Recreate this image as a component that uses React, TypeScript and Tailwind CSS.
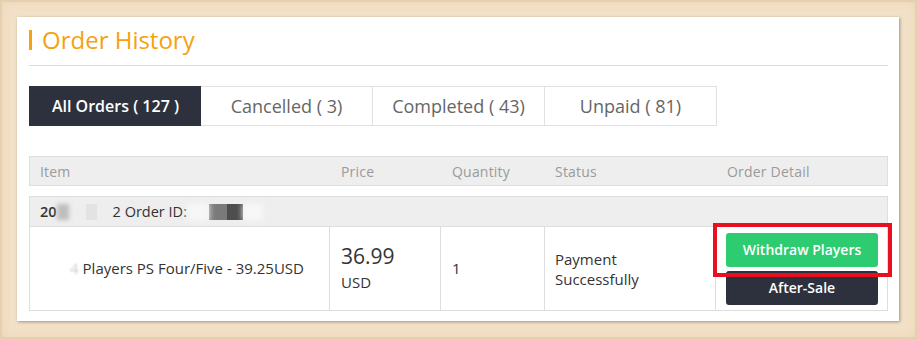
import React from 'react';

const tabs = [
  { label: 'All Orders ( 127 )', active: true },
  { label: 'Cancelled ( 3)', active: false },
  { label: 'Completed ( 43)', active: false },
  { label: 'Unpaid ( 81)', active: false },
];

const cols = 'grid grid-cols-[300px_111px_104px_171px_173px]';

const App: React.FC = () => {
  return (
    <div
      className="w-[917px] h-[339px] bg-[#f2e1c7] p-[17px] shadow-[inset_0_0_0_2px_#e6cfae,inset_0_0_12px_#e8d2b2]"
      style={{ fontFamily: '"Open Sans", "Noto Sans", sans-serif' }}
    >
      <div className="w-[882px] h-[304px] bg-white shadow-[1px_1px_3px_rgba(0,0,0,0.35)] px-[12px] pt-[11px]">
        {/* title */}
        <div className="h-[24px] flex items-center gap-[10px]">
          <span className="w-[3px] h-[20px] bg-[#f5a20e]" />
          <h1 className="text-[24px] leading-none text-[#f5a20e]">Order History</h1>
        </div>
        <div className="mt-[13px] border-t border-[#dcdcdc] w-[859px]" />

        {/* tabs */}
        <div className="mt-[20px] flex">
          {tabs.map((t, i) => (
            <div
              key={t.label}
              className={
                'w-[172px] h-[40px] flex items-center justify-center border-y ' +
                (i === 0 ? 'border-l ' : '') +
                (t.active
                  ? 'bg-[#2d313e] border-[#2d313e] text-white font-semibold text-[16px]'
                  : 'border-r border-[#e1e1e1] text-[#666] text-[18px]')
              }
            >
              {t.label}
            </div>
          ))}
        </div>

        {/* table */}
        <div className="mt-[30px] w-[859px] text-[14px]">
          <div className={cols + ' h-[30px] bg-[#eeeeee] border border-[#dedede] items-center text-[#9a9a9a] tracking-[0.2px]'}>
            <div className="pl-[10px]">Item</div>
            <div className="pl-[11px]">Price</div>
            <div className="pl-[11px]">Quantity</div>
            <div className="pl-[10px]">Status</div>
            <div className="pl-[11px]">Order Detail</div>
          </div>

          <div className="mt-[10px] h-[30px] bg-[#eeeeee] border-x border-t border-[#dedede] flex items-center pl-[10px] text-[#333] text-[14.5px]">
            <span className="font-semibold">20</span>
            <span className="w-[12px] h-[16px] bg-[#bdbdbd] blur-[2px]" />
            <span className="ml-[17px] w-[11px] h-[16px] bg-[#e3e3e3]" />
            <span className="ml-[16px]">2 Order ID:</span>
            <span className="w-[22px] h-[18px] bg-[#f7f7f7] blur-[3px]" />
            <span className="w-[18px] h-[16px] bg-[#7a7a7a]" />
            <span className="w-[16px] h-[16px] bg-[#4e4e4e]" />
            <span className="w-[20px] h-[18px] bg-[#f7f7f7] blur-[3px]" />
          </div>

          <div className={cols + ' h-[85px] border border-[#dedede] text-[#333] text-[15px]'}>
            <div className="border-r border-[#dedede] flex items-center pl-[40px]">
              <span className="text-[#ccc] blur-[1px] mr-[4px]">4</span>
              <span>Players PS Four/Five - 39.25USD</span>
            </div>
            <div className="border-r border-[#dedede] flex flex-col justify-center pl-[11px]">
              <span className="text-[21px] leading-[26px]">36.99</span>
              <span className="text-[15px] leading-[26px]">USD</span>
            </div>
            <div className="border-r border-[#dedede] flex items-center pl-[11px]">1</div>
            <div className="border-r border-[#dedede] flex flex-col justify-center pl-[10px] leading-[20px]">
              <span>Payment</span>
              <span>Successfully</span>
            </div>
            <div className="flex flex-col justify-center pl-[10px] gap-[4px]">
              <div className="relative w-[152px]">
                <button className="w-[152px] h-[34px] rounded-[3px] bg-[#2ecc71] text-white font-semibold text-[14px]">
                  Withdraw Players
                </button>
                <div className="absolute left-[-13px] top-[-10px] w-[179px] h-[54px] border-[4px] border-[#e8101f]" />
              </div>
              <button className="w-[152px] h-[34px] rounded-[3px] bg-[#2d313e] text-white font-semibold text-[14px]">
                After-Sale
              </button>
            </div>
          </div>
        </div>
      </div>
    </div>
  );
};

export default App;
